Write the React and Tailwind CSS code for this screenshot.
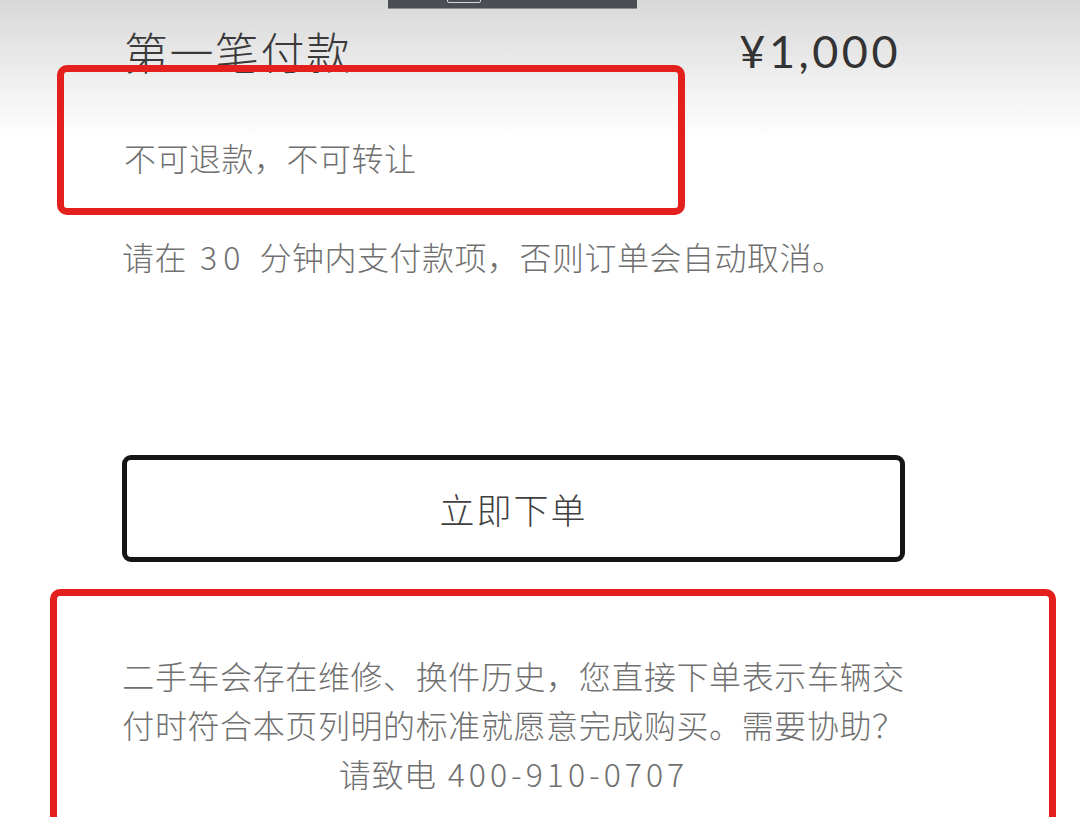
const cjk = "font-['Noto_Sans_CJK_SC',sans-serif]";

const App = () => {
  return (
    <div className="relative w-full h-[817px] overflow-hidden bg-[linear-gradient(to_bottom,#d8d8d8_0px,#f2f2f2_90px,#ffffff_140px)]">
      {/* status strip at the very top */}
      <div className="absolute left-[388px] top-0 w-[249px] h-[9px] bg-[#4b4e54] border-b border-[#8a8c90]">
        <div className="absolute left-[59px] top-[-2px] w-[34px] h-[5px] border border-[#d8d8d8] rounded-b-[2px]" />
      </div>

      {/* first payment row */}
      <div className="flex justify-between items-start pt-[29px] pl-[124px] pr-[182px]">
        <h2 className={`${cjk} text-[44px] leading-none tracking-[1.5px] text-[#3a3a3a] font-light`}>
          第一笔付款
        </h2>
        <span className="font-['Lato',sans-serif] text-[45px] leading-none tracking-[3.5px] text-[#333] mr-[-3px]">
          ¥1,000
        </span>
      </div>

      {/* annotated notice */}
      <div className="relative mt-[-9px] ml-[57px] w-[628px] h-[150px] border-[7px] border-[#e3201c] rounded-[10px]">
        <p className={`${cjk} pl-[60px] pt-[69px] text-[32px] leading-none tracking-[0.5px] text-[#707070] font-light`}>
          不可退款，不可转让
        </p>
      </div>

      <p className={`${cjk} mt-[25px] ml-[122px] text-[32px] leading-none tracking-[0.5px] text-[#707070] font-light whitespace-nowrap`}>
        请在<span className="tracking-[6px]"> 30 </span>分钟内支付款项，否则订单会自动取消。
      </p>

      <button className="mt-[183px] ml-[122px] w-[783px] h-[107px] border-[5px] border-[#151515] rounded-[9px] bg-white flex items-center justify-center">
        <span className={`${cjk} text-[35px] leading-none tracking-[2px] text-[#404040] font-light`}>立即下单</span>
      </button>

      {/* annotated disclaimer */}
      <div className="relative mt-[27px] ml-[50px] w-[1006px] h-[300px] border-[7px] border-[#e3201c] rounded-[10px]">
        <div className={`${cjk} ml-[65px] w-[783px] pt-[55px] text-center text-[32px] leading-[49px] tracking-[0.6px] text-[#707070] font-light whitespace-nowrap`}>
          <div>二手车会存在维修、换件历史，您直接下单表示车辆交</div>
          <div>付时符合本页列明的标准就愿意完成购买。需要协助？</div>
          <div>
            请致电<span className="tracking-[4px]"> 400-910-0707</span>
          </div>
        </div>
      </div>
    </div>
  );
};

export default App;
